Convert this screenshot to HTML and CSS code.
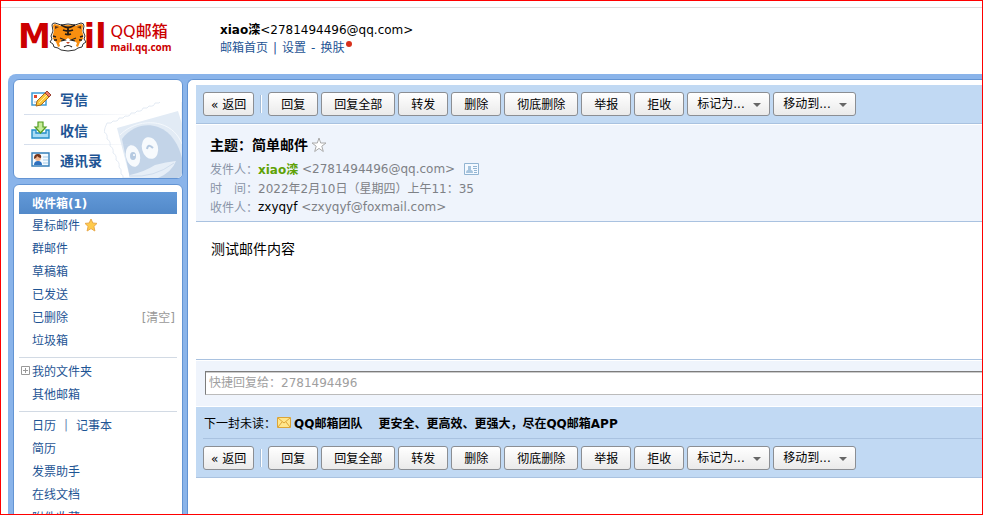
FILE: index.html
```html
<!DOCTYPE html>
<html lang="zh-CN">
<head>
  <meta charset="UTF-8" />
  <title>QQ邮箱</title>
  <link rel="stylesheet" href="styles.css">
</head>
<body>

  <div class="page">
    <header class="header">
      <a class="logo" href="#">
        <span class="logo-mail">M</span>
        <svg class="logo-tiger" width="38" height="30" viewBox="0 0 38 30">
          <path d="M4 9L3 3Q3 1 6 1L12 3Q19 1 26 3L32 1Q35 1 35 4L34 9L36 14L35 17L37 20L34 22L33 25L29 26L26 28Q19 30 12 28L9 26L5 25L4 22L1 20L3 17L2 14Z" fill="#fff" stroke="#333" stroke-width="1"/>
          <path d="M5 9L4 4Q4 2 6 2L12 4Q19 2 26 4L32 2Q34 2 34 4L33 9Q35 13 34 17L31 20L29 25Q24 23 24 20L19 16L14 20Q14 23 9 25L7 20L4 17Q3 13 5 9Z" fill="#f98f10"/>
          <path d="M6 7L6 4L10 5ZM32 7L32 4L28 5Z" fill="#5a3014"/>
          <path d="M14 4Q19 7 24 4M14 8Q19 10 24 8M16 12Q19 13 22 12M19 5V13" fill="none" stroke="#241b16" stroke-width="1.8"/>
          <path d="M4 14L7 15M5 18L8 18M34 14L31 15M33 18L30 18M12 3L14 4M26 3L24 4" fill="none" stroke="#241b16" stroke-width="1.400"/>
          <path d="M10 21Q14 17 19 18Q24 17 28 21Q27 27 19 27Q11 27 10 21Z" fill="#fff"/>
          <path d="M11 16L16 18L12 19M27 16L22 18L26 19M15 25Q19 22 23 25" fill="none" stroke="#222" stroke-width="1.2"/>
          <path d="M17 20H21L19 22Z" fill="#c34522"/>
        </svg>
        <span class="logo-mail">il</span>
        <span class="logo-name">
          <span class="logo-title">QQ邮箱</span>
          <span class="logo-domain">mail.qq.com</span>
        </span>
      </a>
      <div class="user">
        <div><b>xiao滦</b>&lt;2781494496@qq.com&gt;</div>
        <nav class="user-links">
          <a href="#">邮箱首页</a> | <a href="#">设置</a> - <a href="#">换肤</a><i class="red-dot"></i>
        </nav>
      </div>
    </header>

    <div class="frame">
      <aside class="sidebar">
        <nav class="panel quick">
          <svg class="stamp" width="78" height="76" viewBox="0 0 78 76">
            <path d="M3 21q5 1 6-2q5 1 6-3q5 1 6-2q5 1 6-3q5 1 6-2q5 1 6-3q5 1 6-2q5 1 6-3q5 1 6-2q5 1 6-3q5 1 6-2q5 0 9-3V76H19q1-3-2-4q1-5-2-7q1-5-3-7q1-5-3-7q1-5-3-7q1-5-3-7q1-5-3-7q1-5 3-9Z" fill="#fff" stroke="#e3eaf3"/>
            <path d="M13 26L74 9L78 22V76H26Z" fill="#e2ebf5"/>
            <path d="M18 37C28 24 42 21 54 25C68 30 75 44 78 56V76H26Z" fill="#c3d4e8"/>
            <path d="M16 33C28 21 44 19 56 22C68 25 75 34 78 42" fill="none" stroke="#f4f8fc"/>
            <ellipse cx="29" cy="54" rx="7" ry="11" fill="#f7fafd" transform="rotate(-14 29 54)"/>
            <ellipse cx="46" cy="46" rx="8" ry="11" fill="#f7fafd" transform="rotate(-14 46 46)"/>
            <ellipse cx="29" cy="54" rx="3" ry="4" fill="#b6cae1"/>
            <circle cx="30" cy="53" r="1" fill="#fff"/>
            <path d="M43 47q1-6 6-1" fill="none" stroke="#b6cae1" stroke-width="2"/>
            <path d="M26 73Q40 70 51 63Q62 60 72 59Q68 70 54 76H26Z" fill="#e6eef7"/>
            <path d="M26 74Q50 76 70 61" fill="none" stroke="#d0dded"/>
          </svg>
          <a href="#">
            <svg width="20" height="16" viewBox="0 0 20 16">
              <rect x="1" y="2" width="14" height="12" fill="#fff" stroke="#3f9bd5" stroke-width="1.5"/>
              <path d="M3 4h3v3H3z" fill="#e2462c"/>
              <path d="M3 11h4" stroke="#9bc5e2"/>
              <path d="M6 10L15 1L19 5L10 14L5 15Z" fill="#fbc53b" stroke="#a96a18"/>
              <path d="M14 2L16 0L20 4L18 6Z" fill="#ed7b65" stroke="#9b4231"/>
              <path d="M8 12L16 4" stroke="#fff0a0"/>
            </svg>
            写信
          </a>
          <a href="#">
            <svg width="20" height="18" viewBox="0 0 20 18">
              <path d="M1 9H5V12H15V9H18V17H1Z" fill="#a9dcf5" stroke="#258fc7" stroke-width="1.4"/>
              <path d="M7 1H12V6H15L9.500 12L4 6H7Z" fill="#c7ed99" stroke="#539c21" stroke-width="1.200"/>
            </svg>
            收信
          </a>
          <a href="#">
            <svg width="20" height="16" viewBox="0 0 20 16">
              <path d="M1 1H18V14H1Z" fill="#f4faff" stroke="#367fb9" stroke-width="1.4"/>
              <path d="M3 13Q3 9 7 9Q11 9 11 13Z" fill="#2e70bd"/>
              <circle cx="7" cy="6" r="3" fill="#f2b68e"/>
              <path d="M3 6Q3 2 7 2Q11 2 10 6Q8 6 6 4Q6 6 3 7Z" fill="#71351c"/>
              <path d="M12 5h5M12 8h5M12 11h5" stroke="#a5cbe7"/>
            </svg>
            通讯录
          </a>
        </nav>

        <nav class="panel folders">
          <ul>
            <li class="active"><a href="#">收件箱(1)</a></li>
            <li>
              <a href="#">星标邮件</a>
              <svg class="star" width="14" height="14" viewBox="0 0 14 14">
                <path d="M7 1L8.800 5L13 5.400L9.900 8.400L10.900 13L7 10.600L3.100 13L4.100 8.400L1 5.400L5.200 5Z" fill="#ffcb4b" stroke="#e9a94a"/>
              </svg>
            </li>
            <li><a href="#">群邮件</a></li>
            <li><a href="#">草稿箱</a></li>
            <li><a href="#">已发送</a></li>
            <li><a href="#">已删除</a><a class="clear" href="#">[清空]</a></li>
            <li><a href="#">垃圾箱</a></li>
          </ul>
          <ul>
            <li class="tree">
              <svg width="9" height="9" viewBox="0 0 9 9">
                <path d="M.5.5h8v8h-8zM2 4.500h5M4.500 2v5" fill="none" stroke="#999"/>
              </svg>
              <a href="#">我的文件夹</a>
            </li>
            <li><a href="#">其他邮箱</a></li>
          </ul>
          <ul>
            <li><a href="#">日历</a><span class="bar">|</span><a href="#">记事本</a></li>
            <li><a href="#">简历</a></li>
            <li><a href="#">发票助手</a></li>
            <li><a href="#">在线文档</a></li>
            <li><a href="#">附件收藏</a></li>
          </ul>
        </nav>
      </aside>

      <main class="main">
        <div class="toolbar">
          <button class="btn back" type="button">« 返回</button>
          <span class="sep"></span>
          <button class="btn" type="button">回复</button>
          <button class="btn" type="button">回复全部</button>
          <button class="btn" type="button">转发</button>
          <button class="btn" type="button">删除</button>
          <button class="btn" type="button">彻底删除</button>
          <button class="btn" type="button">举报</button>
          <button class="btn" type="button">拒收</button>
          <span class="drop"><select class="btn" aria-label="标记为"><option>标记为...</option></select></span>
          <span class="drop"><select class="btn" aria-label="移动到"><option>移动到...</option></select></span>
        </div>

        <section class="info">
          <h1>
            主题：简单邮件
            <svg width="16" height="16" viewBox="0 0 16 16">
              <path d="M8 1L9.700 6H15L10.800 9.200L12.300 14.500L8 11.400L3.700 14.500L5.200 9.200L1 6H6.300Z" fill="#fff" stroke="#aaa"/>
            </svg>
          </h1>
          <p>
            <span class="label">发件人：</span><b class="sender">xiao滦</b>&nbsp;&lt;2781494496@qq.com&gt;
            <svg class="card" width="15" height="12" viewBox="0 0 15 12">
              <path d="M.5.5h14v11H.5z" fill="#f4f9ff" stroke="#92b4d2"/>
              <path d="M2 10q0-3 2-3V3h3v4q2 0 2 3z" fill="#a6c4de"/>
              <path d="M9 3.500h4M9 5.500h4M10 7.500h3M10 9.500h3" stroke="#92b4d2"/>
            </svg>
          </p>
          <p><span class="label">时　间：</span>2022年2月10日（星期四）上午11：35</p>
          <p><span class="label">收件人：</span><span class="to">zxyqyf</span>&nbsp;&lt;zxyqyf@foxmail.com&gt;</p>
        </section>

        <article class="content">测试邮件内容</article>

        <div class="reply">
          <input type="text" placeholder="快捷回复给：2781494496" aria-label="快捷回复">
        </div>

        <div class="bottom">
          <div class="next">
            下一封未读：
            <svg width="14" height="11" viewBox="0 0 14 11">
              <path d="M.5.5h13v10H.5z" fill="#ffe68c" stroke="#dca436"/>
              <path d="M1 1L7 6L13 1M1 10L5 5M13 10L9 5" fill="none" stroke="#dca436"/>
            </svg>
            <a href="#">QQ邮箱团队</a>
            <a class="next-title" href="#">更安全、更高效、更强大，尽在QQ邮箱APP</a>
          </div>
          <div class="toolbar">
            <button class="btn back" type="button">« 返回</button>
            <span class="sep"></span>
            <button class="btn" type="button">回复</button>
            <button class="btn" type="button">回复全部</button>
            <button class="btn" type="button">转发</button>
            <button class="btn" type="button">删除</button>
            <button class="btn" type="button">彻底删除</button>
            <button class="btn" type="button">举报</button>
            <button class="btn" type="button">拒收</button>
            <span class="drop"><select class="btn" aria-label="标记为"><option>标记为...</option></select></span>
            <span class="drop"><select class="btn" aria-label="移动到"><option>移动到...</option></select></span>
          </div>
        </div>
      </main>
    </div>
  </div>

</body>
</html>
```

FILE: styles.css
```css
* {
  box-sizing: border-box;
}
body {
  margin: 0;
  font-family: "DejaVu Sans", "Noto Sans CJK SC", sans-serif;
  font-size: 12px;
  color: #000;
  background: #fff;
}
a {
  color: #1e5494;
  text-decoration: none;
}
ul, p, h1 {
  margin: 0;
  padding: 0;
  list-style: none;
}
svg {
  flex: none;
}
.page {
  display: flex;
  flex-direction: column;
  height: 100vh;
  border: 1px solid #f00;
  overflow: hidden;
}

/* header */
.header {
  display: flex;
  flex: none;
  margin-top: 6px;
  padding: 13px 0 17px 17px;
  border-top: 1px solid #ddd;
  line-height: 18px;
}
.logo {
  display: flex;
  align-items: center;
  width: 202px;
  height: 32px;
  color: #c00;
}
.logo-mail {
  font-size: 33px;
  font-weight: bold;
  line-height: 32px;
}
.logo-tiger {
  margin: 0 -3px 0 -2px;
  z-index: 1;
}
.logo-name {
  display: flex;
  flex-direction: column;
  gap: 1px;
  margin-left: 4px;
}
.logo-title {
  font-size: 16px;
  font-weight: 500;
  line-height: 18px;
}
.logo-domain {
  font-family: "Noto Sans", sans-serif;
  font-size: 10px;
  font-weight: bold;
  line-height: 10px;
}
.user-links {
  display: flex;
  gap: 5px;
  color: #1e5494;
}
.red-dot {
  width: 6px;
  height: 6px;
  margin: 2px 0 0 -3px;
  border-radius: 50%;
  background: #d8311c;
}

/* frame */
.frame {
  display: flex;
  flex: 1;
  min-height: 0;
  gap: 4px;
  margin-left: 7px;
  padding: 5px 0 0 5px;
  border-radius: 8px 0 0 0;
  background: #8ab4ea;
}
.sidebar {
  display: flex;
  flex-direction: column;
  flex: none;
  gap: 5px;
  width: 170px;
}
.panel {
  border: 1px solid #6394d3;
  border-radius: 6px;
  background: #fff;
}
.quick {
  position: relative;
  flex: none;
  padding: 4px 10px;
  overflow: hidden;
}
.quick a {
  position: relative;
  display: flex;
  align-items: center;
  gap: 9px;
  height: 30px;
  padding-left: 7px;
  font-size: 14px;
  font-weight: 600;
}
.quick a + a {
  border-top: 1px solid;
  border-image: linear-gradient(to right, #d5deec, rgba(255,255,255,0) 80%) 1;
}
.stamp {
  position: absolute;
  right: 0;
  bottom: 0;
}
.folders {
  flex: 1 0 auto;
  padding: 7px 5px 0;
}
.folders ul + ul {
  margin-top: 5px;
  padding-top: 2px;
  border-top: 1px solid #d2dae4;
}
.folders li {
  display: flex;
  align-items: center;
  height: 23px;
  padding: 0 2px 2px 13px;
}
.folders .active {
  height: 22px;
  background: linear-gradient(#6299d8, #5289c9);
}
.active a {
  color: #fff;
  font-weight: bold;
}
.star {
  margin-left: 4px;
}
.folders .clear {
  margin-left: auto;
  color: #999;
}
.folders .tree {
  gap: 2px;
  padding-left: 2px;
}
.bar {
  margin: 0 8px;
  color: #6d8bb0;
}

/* mail */
.main {
  flex: 1;
  min-width: 0;
  padding: 5px 0 0 8px;
  border: 1px solid #6394d3;
  border-width: 1px 0 0 1px;
  border-radius: 6px 0 0 0;
  background: #fff;
}
.toolbar {
  display: flex;
  align-items: center;
  gap: 3px;
  padding: 7px;
  border-bottom: 1px solid #a9c2e0;
  background: #c1d9f3;
}
.btn {
  flex: none;
  height: 24px;
  padding: 0 12px 2px;
  border: 1px solid #8b8e93;
  border-radius: 3px;
  background: linear-gradient(#fff, #eaeaea);
  color: #000;
  font-family: inherit;
  font-size: 12px;
  white-space: nowrap;
}
.back {
  padding: 0 7px 2px;
}
.sep {
  width: 2px;
  height: 18px;
  margin: 0 3px;
  border-left: 1px solid #a3bcd8;
  background: #fff;
}
.drop {
  position: relative;
}
.drop select {
  display: block;
  width: 83px;
  padding: 0 0 0 9px;
  appearance: none;
}
.drop::after {
  content: "";
  position: absolute;
  top: 11px;
  right: 9px;
  border: 4px solid transparent;
  border-top-color: #666;
  border-bottom: 0;
  pointer-events: none;
}
.info {
  margin-top: 1px;
  padding: 9px 14px 5px;
  border-bottom: 1px solid #a9c2e0;
  background: #eff4fc;
  color: #7e8186;
}
.info h1 {
  display: flex;
  align-items: center;
  gap: 3px;
  margin-bottom: 3px;
  color: #000;
  font-size: 14px;
  line-height: 22px;
}
.info p {
  display: flex;
  align-items: center;
  height: 19px;
}
.label {
  width: 48px;
  color: #8a94a8;
}
.sender {
  color: #5fa207;
}
.to {
  color: #000;
}
.card {
  margin-left: 9px;
}
.content {
  min-height: 138px;
  padding: 16px 15px;
  border-bottom: 1px solid #a9c2e0;
  font-size: 14px;
  line-height: 22px;
}
.reply {
  margin: 1px 0;
  padding: 10px 0 11px 9px;
  background: #eff4fc;
}
.reply input {
  display: block;
  width: 100%;
  height: 24px;
  padding: 0 3px;
  border: 1px solid #bbb;
  border-top: 1px solid #7c7c7c;
  border-left-color: #7c7c7c;
  border-right: 0;
  background: #fff;
  box-shadow: inset 0 1px #ccc;
  font-family: inherit;
  font-size: 12px;
}
.reply input::placeholder {
  color: #a0a0a0;
}
.bottom {
  background: #c1d9f3;
}
.next {
  display: flex;
  align-items: center;
  height: 32px;
  margin-left: 7px;
  padding-left: 1px;
  border-bottom: 1px solid #a9c2e0;
}
.next svg {
  margin-left: 1px;
}
.next a {
  margin-left: 3px;
  color: #000;
  font-weight: bold;
}
.next .next-title {
  margin-left: 16px;
}
```
